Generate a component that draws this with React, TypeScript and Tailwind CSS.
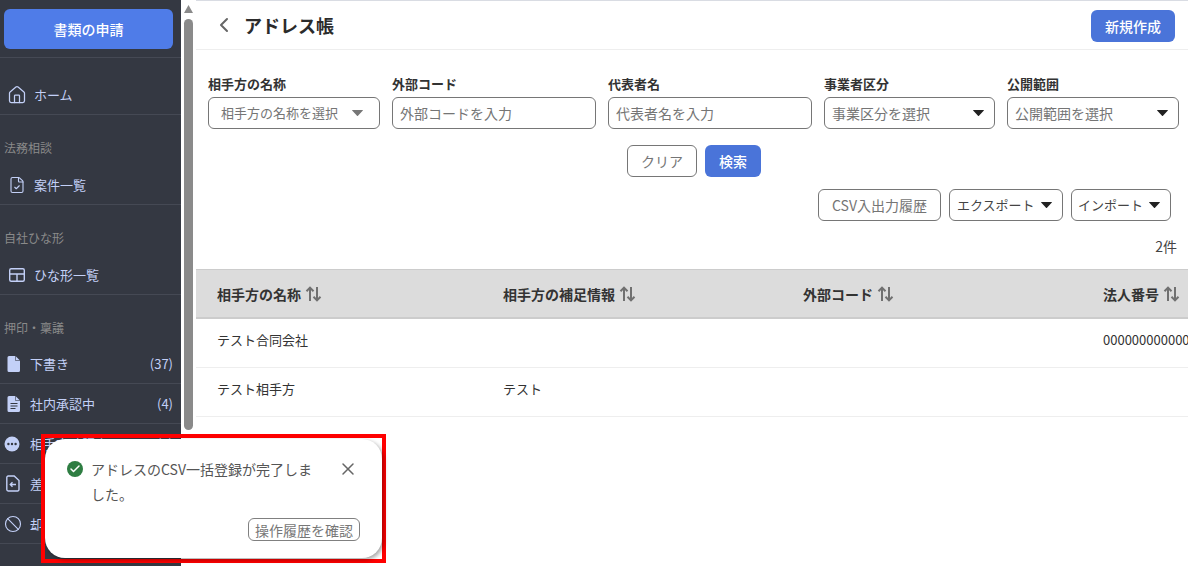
import { ChevronLeft, Check, X, House, FileCheck, Ban } from 'lucide-react';

const FONT = "font-['Noto_Sans_CJK_JP','Noto_Sans',sans-serif]";

const Caret = ({ className = 'text-[#222]' }: { className?: string }) => (
  <svg width="11" height="6" viewBox="0 0 11 6" className={className}>
    <path d="M.4 0h10.2a.35.35 0 0 1 .25.6L6 5.7a.7.7 0 0 1-1 0L.15.6A.35.35 0 0 1 .4 0z" fill="currentColor" />
  </svg>
);

const SortIcon = () => (
  <svg width="17" height="16" viewBox="0 0 17 16" className="text-[#707070]" fill="none" stroke="currentColor" strokeWidth="2">
    <path d="M5 15V2M1.5 5.2 5 1.6l3.5 3.6" />
    <path d="M12 1v13M8.5 10.8 12 14.4l3.5-3.6" />
  </svg>
);

const NavRow = ({ icon, label, count }: { icon: React.ReactNode; label: string; count?: string }) => (
  <div className="flex h-10 items-center border-b border-[#454954] text-[13px] text-[#c3d0f7]">
    <span className="flex w-[30px] shrink-0 justify-center pl-[1px]">{icon}</span>
    <span className="flex-1 whitespace-nowrap">{label}</span>
    {count && <span className="pr-2 text-[13px]">{count}</span>}
  </div>
);

const SectionLabel = ({ children, h }: { children: string; h: string }) => (
  <div className={`${h} pl-1 pt-6 text-xs leading-[18px] text-[#8a8a8a]`}>{children}</div>
);

const FileFilled = ({ lines }: { lines?: boolean }) => (
  <svg width="16" height="18" viewBox="0 0 16 18" className="-ml-[4px]">
    <path d="M3 1h6.5L14 5.5V15.5A1.5 1.5 0 0 1 12.5 17h-9.5A1.5 1.5 0 0 1 1.5 15.5V2.5A1.5 1.5 0 0 1 3 1z" fill="#c3d0f7" />
    {lines && <path d="M4.5 8.5h7M4.5 11h7M4.5 13.5h5" stroke="#343842" strokeWidth="1.2" />}
    <path d="M9.5 1v4.5H14" fill="none" stroke="#343842" strokeWidth=".6" />
  </svg>
);

const Sidebar = () => (
  <aside className="h-[566px] w-[181px] shrink-0 overflow-hidden bg-[#343842]">
    <div className="h-[58px] border-b border-[#454954] px-1 pt-[9px]">
      <button className="h-10 w-[169px] rounded-md bg-[#4f7ce8] text-sm font-medium text-white">書類の申請</button>
    </div>
    <div className="pt-[18px]">
      <div className="flex h-[39px] items-center border-b border-[#454954] text-[13px] text-[#c3d0f7]">
        <House size={20} strokeWidth={1.5} className="ml-[7px] mr-[7px]" />
        ホーム
      </div>
    </div>
    <SectionLabel h="h-[50px]">法務相談</SectionLabel>
    <div className="flex h-10 items-center border-b border-[#454954] text-[13px] text-[#c3d0f7]">
      <FileCheck size={18} strokeWidth={1.5} className="ml-[8px] mr-[8px]" />
      案件一覧
    </div>
    <SectionLabel h="h-[50px]">自社ひな形</SectionLabel>
    <div className="flex h-10 items-center border-b border-[#454954] text-[13px] text-[#c3d0f7]">
      <svg width="18" height="16" viewBox="0 0 18 16" fill="none" stroke="currentColor" strokeWidth="1.4" className="ml-[8px] mr-[8px]">
        <rect x="1.7" y="1.7" width="14.6" height="12.6" rx="1.5" />
        <path d="M1.7 7h14.6M9 7v7.3" />
      </svg>
      ひな形一覧
    </div>
    <SectionLabel h="h-[49px]">押印・稟議</SectionLabel>
    <NavRow icon={<FileFilled />} label="下書き" count="(37)" />
    <NavRow icon={<FileFilled lines />} label="社内承認中" count="(4)" />
    <NavRow
      icon={
        <svg width="16" height="16" viewBox="0 0 16 16" className="-ml-[7px]">
          <circle cx="8" cy="8" r="7.5" fill="#c3d0f7" />
          <circle cx="4.4" cy="8" r="1.2" fill="#343842" />
          <circle cx="8" cy="8" r="1.2" fill="#343842" />
          <circle cx="11.6" cy="8" r="1.2" fill="#343842" />
        </svg>
      }
      label="相手方確認中"
      count="(1)"
    />
    <NavRow
      icon={
        <svg width="14" height="17" viewBox="0 0 14 17" fill="none" stroke="#c3d0f7" strokeWidth="1.4" className="-ml-[5px]">
          <path d="M2.2 1h6L13 5.6V14.6A1.4 1.4 0 0 1 11.6 16H2.2A1.4 1.4 0 0 1 .8 14.6V2.4A1.4 1.4 0 0 1 2.2 1z" />
          <path d="M10 9.5H4.5M6.5 7.3 4.3 9.5l2.2 2.2" />
        </svg>
      }
      label="差戻し"
    />
    <NavRow icon={<Ban size={18} strokeWidth={1.5} className="-ml-[6px]" />} label="却下" />
  </aside>
);

const Scrollbar = () => (
  <div className="flex h-[566px] w-[15px] shrink-0 flex-col items-center bg-white pt-[5px]">
    <svg width="9" height="8" viewBox="0 0 9 8">
      <path d="M4.5 0 9 8H0z" fill="#8a8a8a" />
    </svg>
    <div className="mt-[6px] h-[411px] w-[9px] rounded-[5px] bg-[#8a8a8a]" />
  </div>
);

const Field = ({ label, placeholder, width }: { label: string; placeholder: string; width: string }) => (
  <div className={width}>
    <div className="mb-1 h-[18px] text-[13px] font-bold leading-[18px] text-[#333]">{label}</div>
    <input
      readOnly
      placeholder={placeholder}
      className="h-8 w-full rounded-md border border-[#767676] bg-white px-[7px] text-sm placeholder:text-[#757575]"
    />
  </div>
);

const SelectField = ({
  label,
  placeholder,
  width,
  inset = 'pl-[7px] pr-[10px] text-sm',
  caret,
}: {
  label: string;
  placeholder: string;
  width: string;
  inset?: string;
  caret?: string;
}) => (
  <div className={width}>
    <div className="mb-1 h-[18px] text-[13px] font-bold leading-[18px] text-[#333]">{label}</div>
    <div className={`flex h-8 items-center justify-between rounded-md border border-[#767676] text-[#757575] ${inset}`}>
      <span>{placeholder}</span>
      <Caret className={caret} />
    </div>
  </div>
);

const tableHead = [
  { label: '相手方の名称', w: 'w-[286px]' },
  { label: '相手方の補足情報', w: 'w-[300px]' },
  { label: '外部コード', w: 'w-[300px]' },
  { label: '法人番号', w: 'w-[120px]' },
];

const Toast = () => (
  <div className="absolute left-[41px] top-[434px] h-[129px] w-[345px] border-4 border-[#f00]">
    <div className="relative mt-px h-[119px] w-[337px] rounded-[20px] bg-white shadow-[2px_2px_4px_rgba(0,0,0,0.35)]">
      <div className="flex pl-[22px] pt-[18px]">
        <span className="mr-[9px] mt-[4px] flex h-4 w-4 shrink-0 items-center justify-center rounded-full bg-[#2e7d42]">
          <Check size={12} strokeWidth={3} className="text-white" />
        </span>
        <p className="-ml-px w-[227px] text-[14px] leading-[25px] text-[#555]">アドレスのCSV一括登録が完了しました。</p>
        <X size={20} strokeWidth={1.8} className="ml-[20px] mt-[2px] text-[#666]" />
      </div>
      <div className="mt-[11px] flex justify-end pr-[22px]">
        <button className="h-[23px] w-[112px] rounded-md border border-[#808080] text-[14px] leading-none text-[#777]">操作履歴を確認</button>
      </div>
    </div>
  </div>
);

const App = () => {
  return (
    <div className={`${FONT} relative flex h-[566px] w-[1188px] overflow-hidden bg-white`}>
      <Sidebar />
      <Scrollbar />
      <main className="min-w-0 flex-1 border-t border-[#d9dce3]">
        <header className="flex h-[49px] items-center justify-between border-b border-[#eeeeee] pl-4 pr-[13px]">
          <div className="flex items-center">
            <ChevronLeft size={24} strokeWidth={2} className="text-[#666]" />
            <h1 className="ml-2 text-lg font-bold text-[#2b2b2b]">アドレス帳</h1>
          </div>
          <button className="mb-[-1px] h-8 w-[84px] rounded-md bg-[#4a74d9] text-sm font-medium text-white">新規作成</button>
        </header>

        <div className="flex gap-3 pl-3 pt-[25px]">
          <SelectField label="相手方の名称" placeholder="相手方の名称を選択" width="w-[172px]" inset="pl-3 pr-4 text-[13px]" caret="text-[#777]" />
          <Field label="外部コード" placeholder="外部コードを入力" width="w-[204px]" />
          <Field label="代表者名" placeholder="代表者名を入力" width="w-[204px]" />
          <SelectField label="事業者区分" placeholder="事業区分を選択" width="w-[171px]" />
          <SelectField label="公開範囲" placeholder="公開範囲を選択" width="w-[172px]" />
        </div>

        <div className="mt-4 flex gap-2 pl-[431px]">
          <button className="h-8 w-[70px] rounded-md border border-[#767676] text-sm text-[#757575]">クリア</button>
          <button className="h-8 w-14 rounded-md bg-[#4a74d9] text-sm font-medium text-white">検索</button>
        </div>

        <div className="mt-3 flex justify-end gap-2 pr-[17px]">
          <button className="h-8 w-[123px] rounded-md border border-[#767676] text-sm text-[#757575]">CSV入出力履歴</button>
          <button className="flex h-8 w-[114px] items-center justify-between rounded-md border border-[#767676] pl-[7px] pr-[10px] text-[13px] text-[#444]">
            エクスポート
            <Caret />
          </button>
          <button className="flex h-8 w-[100px] items-center justify-between rounded-md border border-[#767676] pl-[6px] pr-[10px] text-[13px] text-[#444]">
            インポート
            <Caret />
          </button>
        </div>

        <div className="mt-[15px] h-[20px] pr-[11px] text-right text-sm leading-5 text-[#444]">2件</div>

        <div className="mt-[13px] flex h-[50px] w-[1100px] items-center border-t border-b-2 border-[#cccccc] bg-[#dcdcdc] pl-[21px] text-sm font-bold text-[#333]">
          {tableHead.map((col) => (
            <div key={col.label} className={`${col.w} flex shrink-0 items-center gap-1`}>
              {col.label}
              <SortIcon />
            </div>
          ))}
        </div>
        <div className="flex h-[49px] items-center border-b border-[#eeeeee] pb-[6px] pl-[21px] text-[13px] text-[#333]">
          <div className="w-[286px] shrink-0">テスト合同会社</div>
          <div className="w-[300px] shrink-0" />
          <div className="w-[300px] shrink-0" />
          <div className="whitespace-nowrap">0000000000000</div>
        </div>
        <div className="flex h-[49px] items-center border-b border-[#eeeeee] pb-[6px] pl-[21px] text-[13px] text-[#333]">
          <div className="w-[286px] shrink-0">テスト相手方</div>
          <div className="w-[300px] shrink-0">テスト</div>
        </div>
      </main>
      <Toast />
    </div>
  );
};

export default App;
